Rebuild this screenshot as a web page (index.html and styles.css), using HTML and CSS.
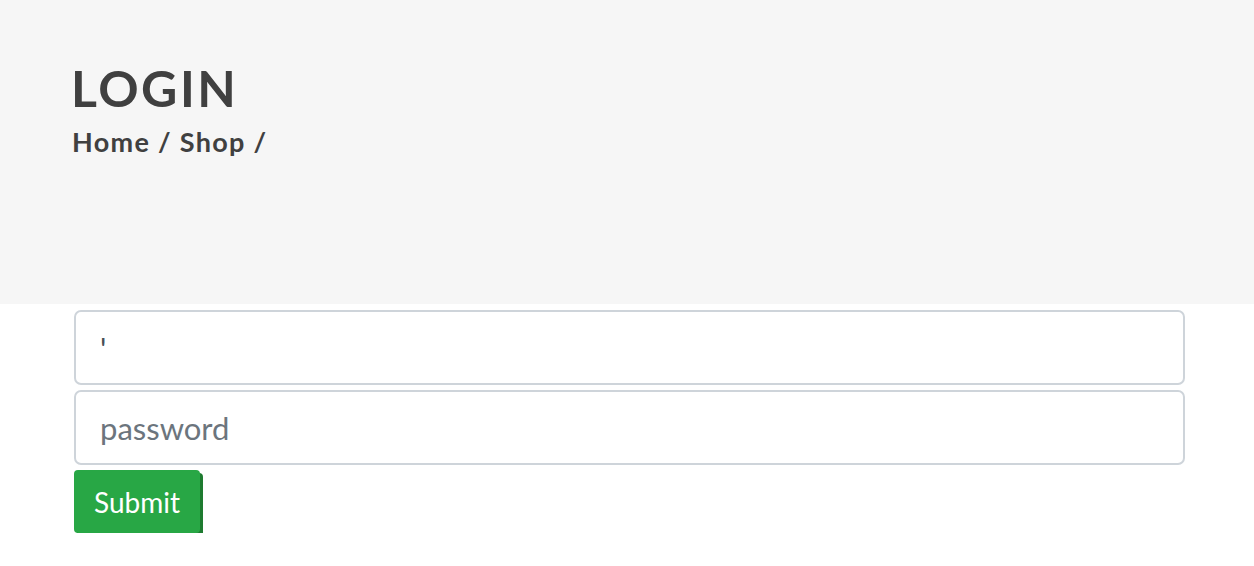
FILE: index.html
```html
<!DOCTYPE html>
<html>
<head>
<meta charset="utf-8">
<link rel="stylesheet" href="styles.css">
</head>
<body>
<header class="hero">
  <h1 class="hero-title">LOGIN</h1>
  <div class="crumbs">Home / Shop /</div>
</header>
<main class="page">
  <form class="login-form">
    <input class="field" type="text" value="'">
    <input class="field" type="password" placeholder="password">
    <button class="submit" type="button">Submit</button>
  </form>
</main>
</body>
</html>
```
FILE: styles.css
```css
html, body {
  margin: 0;
  padding: 0;
  background: #ffffff;
  font-family: Lato, "Open Sans", sans-serif;
}
.hero {
  background: #f6f6f6;
  height: 304px;
  box-sizing: border-box;
  padding: 58px 71px 0;
  color: #404040;
}
.hero-title {
  margin: 0;
  font-size: 50px;
  font-weight: 700;
  line-height: 60px;
  letter-spacing: 2.5px;
}
.crumbs {
  margin-top: 8px;
  font-size: 27px;
  font-weight: 700;
  line-height: 32px;
  letter-spacing: 1.3px;
  padding-left: 1px;
}
.page {
  padding: 6px 69px 0 74px;
}
.login-form {
  display: flex;
  flex-direction: column;
  align-items: flex-start;
  gap: 5px;
}
.field {
  width: 100%;
  height: 75px;
  box-sizing: border-box;
  border: 2px solid #ced4da;
  border-radius: 7px;
  padding: 0 24px;
  font-family: Lato, "Open Sans", sans-serif;
  font-size: 31px;
  color: #495057;
  background: #fff;
  outline: none;
}
.field::placeholder {
  color: #6c757d;
}
.submit {
  background: #28a745;
  color: #fff;
  border: none;
  border-radius: 4px;
  height: 63px;
  width: 126px;
  padding: 0;
  font-family: Lato, "Open Sans", sans-serif;
  font-size: 28px;
  box-shadow: 3px 3px 0 #1e7b30;
}
```
